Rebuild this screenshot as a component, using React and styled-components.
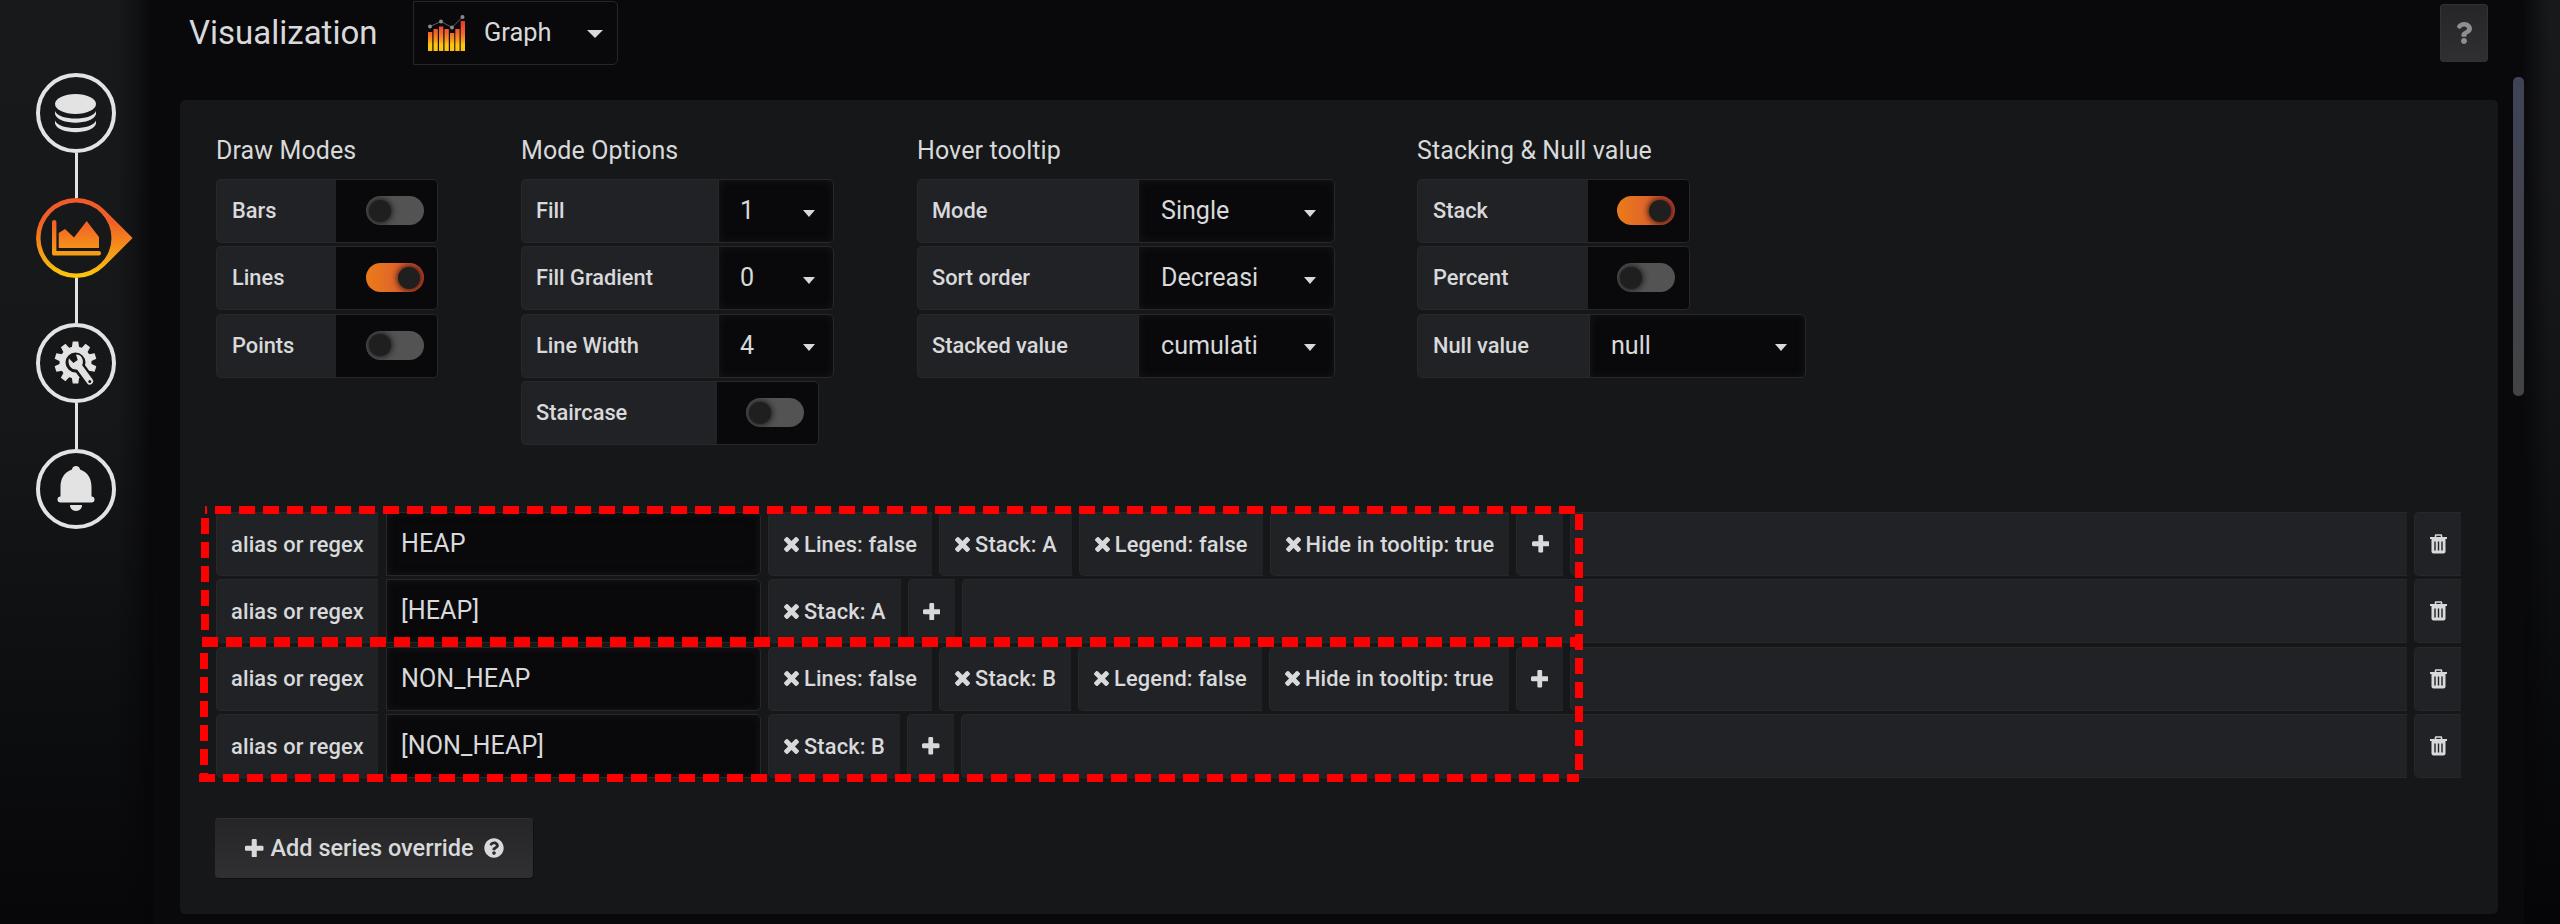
import React from "react";
import styled, { createGlobalStyle, css } from "styled-components";
import { FaQuestion, FaQuestionCircle } from "react-icons/fa";

const Global = createGlobalStyle`
  * { box-sizing: border-box; }
  html, body { margin: 0; background: #09090b; }
  body {
    font-family: Roboto, "Liberation Sans", sans-serif;
    color: #d8d9da;
    width: 2560px; height: 924px; overflow: hidden;
  }
  svg { display: block; flex: none; }
`;

const Page = styled.div`
  position: relative;
  display: flex;
  width: 2560px; height: 924px;
  overflow: hidden;
  background: #09090b;
`;

const Rail = styled.nav`
  flex: none;
  width: 153px; height: 924px;
  padding: 73px 0 0 36px;
  background:
    linear-gradient(90deg, rgba(6,6,8,0) 116px, rgba(6,6,8,.4) 138px, rgba(6,6,8,.9) 153px),
    linear-gradient(180deg, #18191b 0, #161719 45%, #0d0e10 75%, #070709 100%);
`;
const RailLine = styled.div`
  width: 3px; height: 45.2px;
  margin-left: 39px;
  background: #e3e3e3;
`;
const RailItem = styled.div`
  width: 80px; height: 80px;
  display: flex; align-items: center;
  justify-content: ${p => (p.$active ? "flex-start" : "center")};
  border-radius: 50%;
  color: #e3e3e3;
  ${p => !p.$active && css`border: 4.5px solid #e3e3e3;`}
  svg { overflow: visible; }
`;

const Main = styled.main`
  flex: none;
  width: 2371px; height: 924px;
  padding-left: 27px;
  background: #09090b;
`;
const RightEdge = styled.aside`
  flex: 1; height: 924px;
  background:
    linear-gradient(90deg, rgba(6,6,8,.75) 0, rgba(9,9,11,0) 26px),
    linear-gradient(180deg, #18191b 0, #161719 30%, #0b0c0e 70%, #050507 100%);
`;
const Header = styled.header`
  display: flex;
  width: 2317px; height: 100px;
  padding: 1px 9px 0 9px;
`;
const Title = styled.h1`
  margin: 0;
  width: 224px;
  font-size: 33px; font-weight: 400; line-height: 63px;
  white-space: nowrap;
`;
const VizPicker = styled.div`
  width: 205px; height: 64px;
  display: flex; align-items: center;
  padding: 0 14px;
  border: 1px solid #262628;
  border-radius: 0 5px 5px 0;
  font-size: 25.4px; line-height: 60px;
`;
const VizName = styled.span`
  margin-left: 19px; flex: 1;
  padding-bottom: 2px;
`;
const HelpButton = styled.button`
  margin: 3px 0 0 auto;
  width: 48px; height: 58px; padding: 0;
  display: flex; align-items: center; justify-content: center;
  border: 1px solid #323234; border-radius: 3px;
  background: linear-gradient(180deg, #262628, #2f2f32);
  color: #8e8e8e;
`;
const Body = styled.div`
  display: flex; justify-content: space-between;
`;
const Panel = styled.section`
  width: 2318px; height: 814px;
  border-radius: 5px;
  background: #161719;
  padding: 33px 37px 0 36px;
`;
const ScrollThumb = styled.div`
  width: 11px; height: 319px;
  margin-top: -23px;
  border-radius: 5px;
  background: linear-gradient(180deg, #404357 0, #40424c 50%, #424345 100%);
`;

const Options = styled.div`
  display: flex;
  height: 379px;
`;
const Group = styled.div`
  --label-inset: ${p => p.$inset || 15}px;
  --switch-inset: ${p => p.$switchInset || 14}px;
  width: ${p => p.$w}px;
`;
const GroupTitle = styled.h2`
  margin: 0; height: 46px;
  font-size: 25px; font-weight: 400; line-height: 35px;
  letter-spacing: .1px;
  white-space: nowrap;
`;
const Field = styled.div`
  display: flex;
  height: 64px; margin-bottom: 3.4px;
`;
const Label = styled.div`
  width: ${p => p.$w}px; height: 100%;
  flex: none;
  padding-left: var(--label-inset);
  border: 1px solid #27282a; border-right: 0;
  border-radius: 5px 0 0 5px;
  background: #212226;
  font-size: 21.8px; font-weight: 500; line-height: 61px;
  white-space: nowrap;
`;
const SwitchCell = styled.div`
  width: ${p => p.$w}px;
  display: flex; align-items: center; justify-content: flex-end;
  padding: 0 var(--switch-inset) 1px 0;
  border: 1px solid #27282a; border-left: 0;
  border-radius: 0 5px 5px 0;
  background: #09090b;
`;
const Pill = styled.div`
  width: 58px; height: 29px;
  display: flex; align-items: center;
  justify-content: ${p => (p.$on ? "flex-end" : "flex-start")};
  padding: 0 ${p => (p.$on ? 4 : 3)}px;
  border-radius: 15px;
  overflow: hidden;
  background: ${p => (p.$on ? "linear-gradient(90deg, #eb7b18 0, #e0662a 50%, #bb3e2c 100%)" : "#535353")};
  &::after {
    content: "";
    width: 22px; height: 22px;
    border-radius: 50%;
    background: #1f1f20;
    box-shadow: 0 0 6px 1px rgba(0,0,0,.75);
  }
`;
const SelectCell = styled.div`
  width: ${p => p.$w}px;
  display: flex; align-items: center; justify-content: space-between;
  padding: 0 18px 0 ${p => p.$pad || 21}px;
  border: 1px solid #27282a;
  border-radius: 0 5px 5px 0;
  background: #09090b;
  box-shadow: inset 0 0 8px rgba(32,32,34,.6);
  font-size: 25.1px; line-height: 60px;
`;
const Caret = styled.i`
  margin-top: ${p => (p.$big ? 2 : 4)}px;
  border: ${p => (p.$big ? 8 : 6)}px solid transparent;
  border-top: ${p => (p.$big ? 8 : 7)}px solid #d8d9da;
  border-bottom: 0;
`;

const Overrides = styled.div`
  display: flex; flex-direction: column; gap: 3.4px;
`;
const OverrideRow = styled.div`
  display: flex; gap: 7px;
  width: 2245px; height: 64px;
`;
const Tag = styled.div`
  flex: none;
  display: flex; align-items: center; justify-content: center;
  height: 100%;
  width: ${p => (p.$w ? p.$w + "px" : "auto")};
  padding: 0 15px;
  border: 1px solid #27282a; border-right: 0;
  border-radius: 5px 0 0 5px;
  background: #212226;
  font-size: 21.8px; font-weight: 500; line-height: 61px;
  letter-spacing: .14px;
  white-space: nowrap;
`;
const TagText = styled.span`
  margin-left: 5px;
`;
const AliasInput = styled.div`
  flex: none;
  width: 375px; margin-left: 1px;
  padding-left: 14px;
  border: 1px solid #27282a;
  border-radius: 0 5px 5px 0;
  background: #09090b;
  box-shadow: inset 0 0 8px rgba(32,32,34,.6);
  font-size: 25.1px; line-height: 62px;
  letter-spacing: .1px;
`;
const Filler = styled(Tag)`
  flex: 1;
`;
const AddButton = styled.button`
  display: flex; align-items: center;
  margin: 40px 0 0 -1px;
  width: 318px; height: 60px;
  padding: 0 0 0 30px;
  border: 0; border-radius: 4px;
  background: linear-gradient(180deg, #252527, #303032);
  box-shadow: inset 0 1px 0 #303032, 1px 1px 0 #101012;
  color: #d8d9da;
  font: 500 23.5px/60px Roboto, "Liberation Sans", sans-serif;
  white-space: nowrap;
`;
const AddText = styled.span`
  margin: 0 10px 0 7px;
`;
const Annotation = styled.svg`
  position: absolute; left: 0; top: 0;
  pointer-events: none;
`;

const PlusIcon = ({ size }) => (
  <svg width={size} height={size} viewBox="192 128 1408 1408" fill="currentColor">
    <path d="M1600 736v192q0 40-28 68t-68 28h-416v416q0 40-28 68t-68 28h-192q-40 0-68-28t-28-68v-416h-416q-40 0-68-28t-28-68v-192q0-40 28-68t68-28h416v-416q0-40 28-68t68-28h192q40 0 68 28t28 68v416h416q40 0 68 28t28 68z" />
  </svg>
);
const TimesIcon = () => (
  <svg width="15" height="15" viewBox="302 366 1188 1188" fill="currentColor">
    <path d="M1490 1322q0 40-28 68l-136 136q-28 28-68 28t-68-28l-294-294-294 294q-28 28-68 28t-68-28l-136-136q-28-28-28-68t28-68l294-294-294-294q-28-28-28-68t28-68l136-136q28-28 68-28t68 28l294 294 294-294q28-28 68-28t68 28l136 136q28 28 28 68t-28 68l-294 294 294 294q28 28 28 68z" />
  </svg>
);

const ChartIcon = () => (
  <svg width="98" height="80" viewBox="0 0 98 80">
    <defs>
      <linearGradient id="hot" x1="0" y1="0" x2="0" y2="80" gradientUnits="userSpaceOnUse">
        <stop offset="0" stopColor="#f05a28" />
        <stop offset=".3" stopColor="#f15f27" />
        <stop offset="1" stopColor="#fbca0a" />
      </linearGradient>
    </defs>
    <path fill="url(#hot)" fillRule="evenodd" d="M68.300 11.700L96.600 40L68.300 68.300A40 40 0 1 1 68.300 11.700ZM40 4.500a35.500 35.500 0 1 0 0 71a35.500 35.500 0 0 0 0-71Z" />
    <path fill="url(#hot)" d="M18.200 22q2.200 0 2.200 2V53H63q2 0 2 2.200T63 57.500H18q-2 0-2-2V24q0-2 2.200-2Z" />
    <path fill="url(#hot)" d="M22.700 35L29 31l9 8.500L50.700 23L63 39V50H22.700Z" />
  </svg>
);

const DatabaseIcon = () => (
  <svg width="42" height="38" viewBox="0 0 42 38" fill="currentColor">
    <ellipse cx="20.500" cy="10" rx="20.500" ry="10" />
    <path d="M0 17C3.500 27 37.500 27 41 17V20C38.500 31.500 2.500 31.500 0 20Z" />
    <path d="M0 26.500C3.500 36.500 37.500 36.500 41 26.500V29.500C38.500 41 2.500 41 0 29.500Z" />
  </svg>
);

const GearIcon = () => {
  const teeth = Array.from({ length: 10 }, (_, i) => (
    <path key={i} d="M-3.800-14L-2.800-21H2.800L3.800-14Z" transform={`rotate(${i * 36})`} />
  ));
  return (
    <svg width="42" height="42" viewBox="-20.500 -20.500 42 42" fill="currentColor">
      {teeth}
      <circle r="13" fill="none" stroke="currentColor" strokeWidth="6" />
      <path d="M4 5L15 20" stroke="#161719" strokeWidth="11.500" strokeLinecap="round" />
      <path d="M2 2L14.300 18.800" stroke="currentColor" strokeWidth="6.600" strokeLinecap="round" />
      <path d="M-6.500-4L-2 0.500L2.200-2.500L0.500-8C6-8 8.500-3 7 2L2 7C-4 8-8.500 2-6.500-4Z" />
      <circle cx="14.300" cy="19" r="1.500" fill="#161719" />
    </svg>
  );
};

const BellIcon = () => (
  <svg width="38" height="46" viewBox="0 0 38 46" fill="currentColor">
    <path d="M19 0c2.200 0 3.800 1.500 4 3.500C31 6 34.500 13 34.500 21v9.500c2 0 3 1 3 3s-1 3-3 3h-31c-2 0-3-1-3-3s1-3 3-3V21C3.500 13 7 6 15 3.500C15.200 1.500 16.800 0 19 0Z" />
    <path d="M13 39h12c0 8-12 8-12 0Z" />
  </svg>
);

const bars = [[0, 17], [5.5, 14], [11, 11.5], [16.5, 14], [22, 18], [27.3, 14], [32.7, 6]];
const GraphLogo = () => (
  <svg width="37" height="36" viewBox="0 0 37 36">
    <defs>
      <linearGradient id="bar" x1="0" y1="6" x2="0" y2="36" gradientUnits="userSpaceOnUse">
        <stop offset="0" stopColor="#ec3232" />
        <stop offset=".4" stopColor="#f0662b" />
        <stop offset=".65" stopColor="#f99a1c" />
        <stop offset=".8" stopColor="#fcc80c" />
        <stop offset="1" stopColor="#fbbe14" />
      </linearGradient>
    </defs>
    {bars.map(([x, y]) => <rect key={x} x={x} y={y} width="4.300" height={36 - y} fill="url(#bar)" />)}
    <path d="M2 11.500L13 6.500L24 12.500L34.500 2" stroke="#5f5f5f" strokeWidth="1" fill="none" />
    <g fill="#8b8b8b">
      <circle cx="2" cy="11.500" r="2" /><circle cx="13" cy="6.500" r="2" />
      <circle cx="24" cy="12.500" r="2" /><circle cx="34.500" cy="2" r="2" />
    </g>
  </svg>
);

const TrashIcon = () => (
  <svg width="17" height="20" viewBox="0 0 17 20">
    <path d="M5.500 3V1.500Q5.500 1 6 1H11Q11.500 1 11.500 1.500V3" fill="none" stroke="#d8d9da" strokeWidth="1.600" />
    <path d="M0 3H17V5H0Z" fill="#d8d9da" />
    <path d="M1.500 5H15.500V17.500Q15.500 19.500 13.500 19.500H3.500Q1.500 19.500 1.500 17.500Z" fill="#d8d9da" />
    <path d="M5 7.500V16.500M8.500 7.500V16.500M12 7.500V16.500" stroke="#212226" strokeWidth="1.400" />
  </svg>
);

const SwitchField = ({ label, lw, w, on }) => (
  <Field><Label $w={lw}>{label}</Label><SwitchCell $w={w}><Pill $on={on} /></SwitchCell></Field>
);
const SelectField = ({ label, lw, w, pad, value }) => (
  <Field><Label $w={lw}>{label}</Label><SelectCell $w={w} $pad={pad}>{value}<Caret /></SelectCell></Field>
);

const rows = [
  { alias: "HEAP", tags: ["Lines: false", "Stack: A", "Legend: false", "Hide in tooltip: true"] },
  { alias: "[HEAP]", tags: ["Stack: A"] },
  { alias: "NON_HEAP", tags: ["Lines: false", "Stack: B", "Legend: false", "Hide in tooltip: true"] },
  { alias: "[NON_HEAP]", tags: ["Stack: B"] },
];

export default function App() {
  return (
    <Page>
      <Global />
      <Rail>
        <RailItem><DatabaseIcon /></RailItem>
        <RailLine />
        <RailItem $active><ChartIcon /></RailItem>
        <RailLine />
        <RailItem><GearIcon /></RailItem>
        <RailLine />
        <RailItem><BellIcon /></RailItem>
      </Rail>
      <Main>
        <Header>
          <Title>Visualization</Title>
          <VizPicker><GraphLogo /><VizName>Graph</VizName><Caret $big /></VizPicker>
          <HelpButton><FaQuestion size={22} /></HelpButton>
        </Header>
        <Body>
          <Panel>
            <Options>
              <Group $w={305} $switchInset={13}>
                <GroupTitle>Draw Modes</GroupTitle>
                <SwitchField label="Bars" lw={120} w={102} />
                <SwitchField label="Lines" lw={120} w={102} on />
                <SwitchField label="Points" lw={120} w={102} />
              </Group>
              <Group $w={396} $inset={14}>
                <GroupTitle>Mode Options</GroupTitle>
                <SelectField label="Fill" lw={197} w={116} value="1" />
                <SelectField label="Fill Gradient" lw={197} w={116} value="0" />
                <SelectField label="Line Width" lw={197} w={116} value="4" />
                <SwitchField label="Staircase" lw={196} w={102} />
              </Group>
              <Group $w={500} $inset={14}>
                <GroupTitle>Hover tooltip</GroupTitle>
                <SelectField label="Mode" lw={221} w={197} pad={22} value="Single" />
                <SelectField label="Sort order" lw={221} w={197} pad={22} value="Decreasi" />
                <SelectField label="Stacked value" lw={221} w={197} pad={22} value="cumulati" />
              </Group>
              <Group $w={400}>
                <GroupTitle>Stacking &amp; Null value</GroupTitle>
                <SwitchField label="Stack" lw={171} w={102} on />
                <SwitchField label="Percent" lw={171} w={102} />
                <SelectField label="Null value" lw={172} w={217} value="null" />
              </Group>
            </Options>
            <Overrides>
              {rows.map(r => (
                <OverrideRow key={r.alias}>
                  <Tag $w={162}>alias or regex</Tag>
                  <AliasInput>{r.alias}</AliasInput>
                  {r.tags.map(t => (
                    <Tag key={t}><TimesIcon /><TagText>{t}</TagText></Tag>
                  ))}
                  <Tag $w={47}><PlusIcon size={17.5} /></Tag>
                  <Filler />
                  <Tag $w={47}><TrashIcon /></Tag>
                </OverrideRow>
              ))}
            </Overrides>
            <AddButton><PlusIcon size={18.5} /><AddText>Add series override</AddText><FaQuestionCircle size={20} /></AddButton>
          </Panel>
          <ScrollThumb />
        </Body>
      </Main>
      <RightEdge />
      <Annotation width="2560" height="924" fill="none" stroke="#f00">
        <path d="M205 510H207" strokeWidth="8" />
        <path d="M215 510H1575" strokeWidth="8" strokeDasharray="16 8" />
        <path d="M205 518V638" strokeWidth="8" strokeDasharray="16 8" />
        <path d="M1579 514V771" strokeWidth="8" strokeDasharray="16 8" />
        <path d="M202 642H1579" strokeWidth="10" strokeDasharray="16 8" />
        <path d="M204 653V774" strokeWidth="8" strokeDasharray="16 8" />
        <path d="M199 778H1579" strokeWidth="8" strokeDasharray="16 8" />
      </Annotation>
    </Page>
  );
}
